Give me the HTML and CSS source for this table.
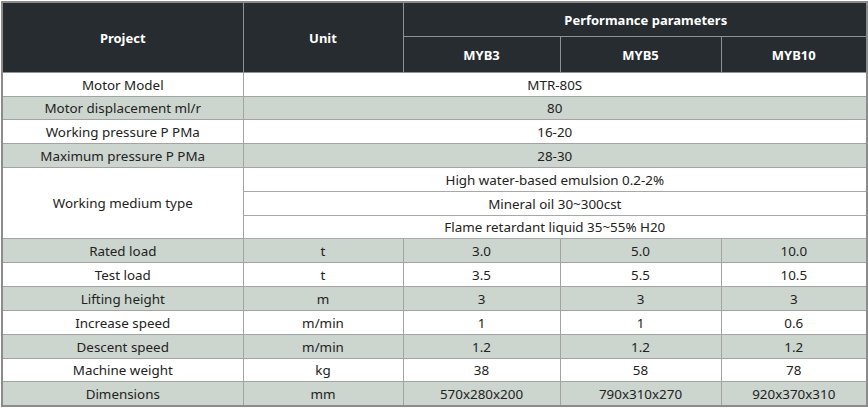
FILE: index.html
```html
<!DOCTYPE html>
<html>
<head>
<meta charset="utf-8">
<link rel="stylesheet" href="styles.css">
</head>
<body>
<table class="spec">
  <colgroup>
    <col class="c-project">
    <col class="c-unit">
    <col class="c-m3">
    <col class="c-m5">
    <col class="c-m10">
  </colgroup>
  <thead>
    <tr class="h1">
      <th rowspan="2">Project</th>
      <th rowspan="2">Unit</th>
      <th colspan="3" class="perf">Performance parameters</th>
    </tr>
    <tr class="h2">
      <th>MYB3</th>
      <th>MYB5</th>
      <th>MYB10</th>
    </tr>
  </thead>
  <tbody>
    <tr class="w"><td>Motor Model</td><td colspan="4">MTR-80S</td></tr>
    <tr class="g s"><td>Motor displacement ml/r</td><td colspan="4">80</td></tr>
    <tr class="w"><td>Working pressure P PMa</td><td colspan="4">16-20</td></tr>
    <tr class="g"><td>Maximum pressure P PMa</td><td colspan="4">28-30</td></tr>
    <tr class="w"><td rowspan="3">Working medium type</td><td colspan="4" class="sub">High water-based emulsion 0.2-2%</td></tr>
    <tr class="w"><td colspan="4" class="sub">Mineral oil 30~300cst</td></tr>
    <tr class="w s"><td colspan="4" class="sub">Flame retardant liquid 35~55% H20</td></tr>
    <tr class="g"><td>Rated load</td><td>t</td><td>3.0</td><td>5.0</td><td>10.0</td></tr>
    <tr class="w"><td>Test load</td><td>t</td><td>3.5</td><td>5.5</td><td>10.5</td></tr>
    <tr class="g"><td>Lifting height</td><td>m</td><td>3</td><td>3</td><td>3</td></tr>
    <tr class="w"><td>Increase speed</td><td>m/min</td><td>1</td><td>1</td><td>0.6</td></tr>
    <tr class="g"><td>Descent speed</td><td>m/min</td><td>1.2</td><td>1.2</td><td>1.2</td></tr>
    <tr class="w s"><td>Machine weight</td><td>kg</td><td>38</td><td>58</td><td>78</td></tr>
    <tr class="g"><td>Dimensions</td><td>mm</td><td>570x280x200</td><td>790x310x270</td><td>920x370x310</td></tr>
  </tbody>
</table>
</body>
</html>
```
FILE: styles.css
```css
html, body {
  margin: 0;
  padding: 0;
  background: #ffffff;
}
body {
  padding: 1px 0 0 1px;
  font-family: "Noto Sans", "Open Sans", sans-serif;
}
.spec {
  border-collapse: collapse;
  table-layout: fixed;
  width: 865px;
  border: 2px solid #8c8c8c;
  font-size: 13.4px;
  color: #222222;
}
.c-project { width: 241px; }
.c-unit { width: 160px; }
.c-m3 { width: 157px; }
.c-m5 { width: 161px; }
.c-m10 { width: 146px; }

.spec th {
  background: #262c30;
  color: #ffffff;
  font-weight: 700;
  font-size: 13px;
  border: 1px solid #8d9296;
  padding: 0;
  text-align: center;
}
.spec th.perf { padding-left: 22px; }
.spec .h1 th { height: 33px; }
.spec .h2 th { height: 35px; }

.spec td {
  border: 1px solid #a3a3a3;
  padding: 0;
  height: 23px;
  text-align: center;
  line-height: 16px;
}
.spec tr.s td { height: 22px; }
.spec tr.g td { background: #cdd5cf; }
.spec tr.w td { background: #ffffff; }
.spec td.sub { border-color: #a8a8a8; }
```
